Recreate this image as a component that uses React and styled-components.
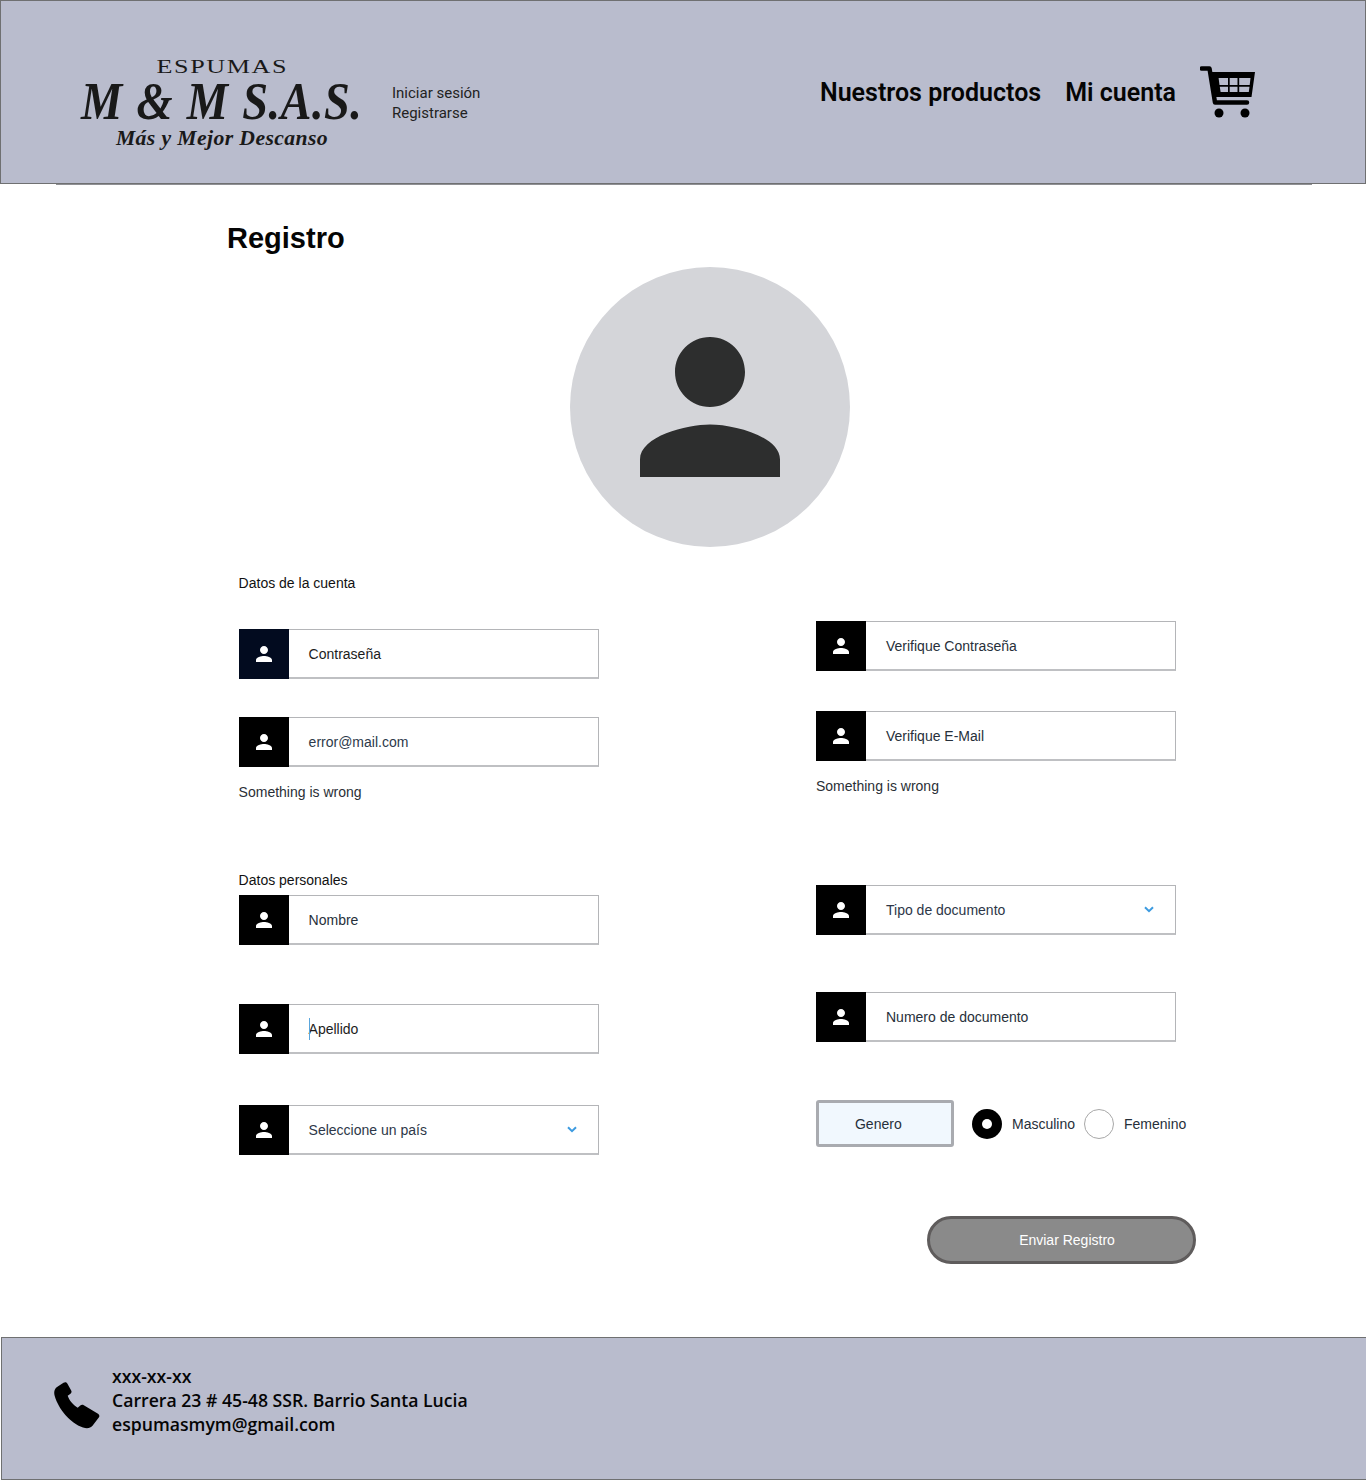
import React from "react";
import styled, { createGlobalStyle } from "styled-components";

const Global = createGlobalStyle`
  html, body { margin: 0; padding: 0; background: #fff; }
  body { font-family: "Liberation Sans", Arial, sans-serif; width: 1366px; }
  * { box-sizing: border-box; }
`;

const Page = styled.div`
  width: 1366px;
  height: 1480px;
  display: flex;
  flex-direction: column;
`;

const Header = styled.header`
  height: 184px;
  flex: none;
  background: #b9bccd;
  border: 1px solid #6f7071;
  display: flex;
  align-items: flex-start;
  padding: 0 110px 0 81px;
`;

const Logo = styled.div`
  width: 280px;
  margin-top: 57px;
  display: flex;
  flex-direction: column;
  align-items: center;
  color: #191919;
  font-family: "Liberation Serif", "Times New Roman", serif;
  white-space: nowrap;
`;

const LogoTop = styled.div`
  font-size: 18px;
  line-height: 18px;
  letter-spacing: 1.1px;
  transform: scaleX(1.45);
`;

const LogoMain = styled.div`
  font-size: 53px;
  line-height: 51px;
  font-style: italic;
  font-weight: 700;
  letter-spacing: 0.5px;
  word-spacing: 2px;
  transform: scaleX(0.875);
`;

const LogoTag = styled.div`
  font-size: 21.7px;
  line-height: 26px;
  margin-top: -2px;
  font-style: italic;
  font-weight: 700;
  letter-spacing: 0.4px;
`;

const AuthLinks = styled.div`
  margin: 82px 0 0 30px;
  display: flex;
  flex-direction: column;
  font-family: Roboto, sans-serif;
  font-size: 15px;
  line-height: 20px;
  color: #222;
`;

const Nav = styled.nav`
  margin-left: auto;
  margin-top: 64px;
  display: flex;
  align-items: flex-start;
  gap: 24px;
  font-family: Roboto, sans-serif;
  font-weight: 600;
  font-size: 25px;
  line-height: 56px;
  color: #050505;
  height: 54px;
  white-space: nowrap;
`;

const NavLink = styled.span`
  display: block;
`;

const Rule = styled.div`
  flex: none;
  height: 1px;
  width: 1256px;
  margin-left: 56px;
  background: #8f9094;
`;

const Main = styled.main`
  flex: 1;
  padding: 36px 0 0 227px;
  display: flex;
  flex-direction: column;
`;

const Title = styled.h1`
  margin: 0;
  font-size: 29px;
  line-height: 34px;
  font-weight: 700;
  color: #050505;
`;

const Avatar = styled.div`
  width: 280px;
  height: 280px;
  margin: 12px 0 0 343px;
  border-radius: 50%;
  background: #d4d5d9;
  display: flex;
  align-items: center;
  justify-content: center;
  color: #2d2e2e;
`;

const FormGrid = styled.div`
  margin-left: 11.6px;
  display: grid;
  grid-template-columns: 360px 380px;
  column-gap: 217.4px;
  align-items: start;
`;

const Column = styled.div`
  display: flex;
  flex-direction: column;
`;

const SectionLabel = styled.div`
  margin-top: ${(p) => p.$top}px;
  font-size: 14px;
  line-height: 16px;
  color: #111;
`;

const Message = styled.div`
  margin-top: ${(p) => p.$top}px;
  font-size: 14px;
  line-height: 16px;
  color: #2a2f36;
`;

const Field = styled.div`
  margin-top: ${(p) => p.$top}px;
  width: 360px;
  height: 50px;
  display: flex;
`;

const IconBox = styled.div`
  flex: none;
  width: 50px;
  background: ${(p) => p.$bg || "#000"};
  color: #fff;
  display: flex;
  align-items: center;
  justify-content: center;
`;

const FieldBody = styled.div`
  flex: 1;
  background: #fff;
  border: 1px solid #b4b5b8;
  border-left: none;
  border-bottom: 2px solid #bfc0c3;
  padding: 0 21px 0 20px;
  display: flex;
  align-items: center;
  justify-content: space-between;
  font-size: 14px;
  color: ${(p) => p.$color || "#1c1c1c"};
`;

const FieldText = styled.span`
  position: relative;
`;

const Caret = styled.span`
  position: absolute;
  left: 0;
  top: -3px;
  width: 1px;
  height: 22px;
  background: #5aa6dc;
`;

const GenderRow = styled.div`
  margin-top: ${(p) => p.$top}px;
  height: 47px;
  display: flex;
  align-items: center;
  font-size: 14px;
  color: #27303a;
`;

const GenderBox = styled.div`
  width: 138px;
  height: 47px;
  background: #f1f8fe;
  border: 3px solid #a9abb0;
  border-radius: 3px;
  padding-left: 36px;
  display: flex;
  align-items: center;
  margin-right: 18px;
`;

const Radio = styled.span`
  flex: none;
  width: 30px;
  height: 30px;
  border-radius: 50%;
  margin-right: 10px;
  display: flex;
  align-items: center;
  justify-content: center;
  background: ${(p) => (p.$on ? "#000" : "#fff")};
  border: ${(p) => (p.$on ? "none" : "1px solid #a8a8a8")};
  &::after {
    content: "";
    display: ${(p) => (p.$on ? "block" : "none")};
    width: 10px;
    height: 10px;
    border-radius: 50%;
    background: #fff;
  }
`;

const RadioLabel = styled.span`
  margin-right: 9px;
`;

const Submit = styled.button`
  margin-top: ${(p) => p.$top}px;
  align-self: flex-end;
  width: 269px;
  height: 48px;
  padding: 0 0 0 11px;
  background: #8a8a8a;
  border: 3px solid #5f5c5c;
  border-radius: 24px;
  color: #fff;
  font-family: "Liberation Sans", Arial, sans-serif;
  font-size: 14px;
`;

const Footer = styled.footer`
  flex: none;
  height: 143px;
  margin-left: 1px;
  background: #b9bccd;
  border: 1px solid #6f7071;
  border-right: none;
  display: flex;
  align-items: flex-start;
  padding: 26px 0 0 52px;
`;

const Contact = styled.div`
  margin-left: 12px;
  font-family: "Open Sans", "Noto Sans", sans-serif;
  font-weight: 600;
  font-size: 17.65px;
  line-height: 24px;
  color: #050505;
  white-space: nowrap;
`;

const PhoneWrap = styled.div`
  margin-top: 18px;
  line-height: 0;
`;

const Person = ({ size = 24 }) => (
  <svg width={size} height={size} viewBox="0 0 24 24" fill="currentColor" aria-hidden="true">
    <path d="M12 12c2.21 0 4-1.79 4-4s-1.79-4-4-4-4 1.79-4 4 1.79 4 4 4zm0 2c-2.67 0-8 1.34-8 4v2h16v-2c0-2.66-5.33-4-8-4z" />
  </svg>
);

const Chevron = () => (
  <svg width="10" height="7" viewBox="0 0 10 7" fill="none" aria-hidden="true">
    <path d="M1 1.2 5 5.2 9 1.2" stroke="#3d9be0" strokeWidth="2" />
  </svg>
);

const Cart = () => (
  <svg width="55" height="53" viewBox="0 0 55 53" aria-hidden="true">
    <path d="M1.5 3.5H9.5L15 37.5H47" fill="none" stroke="#000" strokeWidth="4.5" strokeLinecap="round" strokeLinejoin="round" />
    <path
      fillRule="evenodd"
      d="M10 7H55L51.5 32H14ZM18.6 13 19.5 20H28V13ZM29.7 13V20H37.5V13ZM39.2 13V20H49.7L50.5 13ZM19.8 21.7 20.6 27H28V21.7ZM29.7 21.7V27H37.5V21.7ZM39.2 21.7V27H48.8L49.5 21.7Z"
      fill="#000"
    />
    <circle cx="19" cy="48" r="4.5" fill="#000" />
    <circle cx="45" cy="48" r="4.5" fill="#000" />
  </svg>
);

const Phone = () => (
  <svg width="46" height="47" viewBox="0 0 46 47" aria-hidden="true">
    <path
      fill="#000"
      d="M3 5 9.5.8C11-.2 12.5.2 13.3 1.5L17.2 8.5C17.9 9.8 17.5 11 16.5 11.8L13.7 13.8C15 18 19 23 23.7 25.8L26.3 23.5C27.3 22.6 28.6 22.5 29.8 23.2L44 31.8C45.5 32.8 45.8 34.3 44.8 35.6L38.5 43.8C36.5 46.2 33 46.8 29 45.5 16 41 4.5 27 .7 14-.5 10 .6 6.8 3 5Z"
    />
  </svg>
);

const InputField = ({ top, text, bg, color, select, caret }) => (
  <Field $top={top}>
    <IconBox $bg={bg}>
      <Person />
    </IconBox>
    <FieldBody $color={color}>
      <FieldText>
        {caret && <Caret />}
        {text}
      </FieldText>
      {select && <Chevron />}
    </FieldBody>
  </Field>
);

export default function App() {
  return (
    <Page>
      <Global />
      <Header>
        <Logo>
          <LogoTop>ESPUMAS</LogoTop>
          <LogoMain>M &amp; M S.A.S.</LogoMain>
          <LogoTag>Más y Mejor Descanso</LogoTag>
        </Logo>
        <AuthLinks>
          <span>Iniciar sesión</span>
          <span>Registrarse</span>
        </AuthLinks>
        <Nav>
          <NavLink>Nuestros productos</NavLink>
          <NavLink>Mi cuenta</NavLink>
          <Cart />
        </Nav>
      </Header>
      <Rule />
      <Main>
        <Title>Registro</Title>
        <Avatar>
          <Person size={210} />
        </Avatar>
        <FormGrid>
          <Column>
            <SectionLabel $top={28}>Datos de la cuenta</SectionLabel>
            <InputField top={38} text="Contraseña" bg="#020b1f" />
            <InputField top={38} text="error@mail.com" color="#2d3a4a" />
            <Message $top={17}>Something is wrong</Message>
            <SectionLabel $top={72}>Datos personales</SectionLabel>
            <InputField top={7} text="Nombre" color="#27303a" />
            <InputField top={59} text="Apellido" caret />
            <InputField top={51} text="Seleccione un país" color="#2d3748" select />
          </Column>
          <Column>
            <InputField top={74} text="Verifique Contraseña" color="#27303a" />
            <InputField top={40} text="Verifique E-Mail" color="#27303a" />
            <Message $top={17}>Something is wrong</Message>
            <InputField top={91} text="Tipo de documento" color="#2d3748" select />
            <InputField top={57} text="Numero de documento" color="#27303a" />
            <GenderRow $top={58}>
              <GenderBox>Genero</GenderBox>
              <Radio $on />
              <RadioLabel>Masculino</RadioLabel>
              <Radio />
              <span>Femenino</span>
            </GenderRow>
            <Submit $top={69}>Enviar Registro</Submit>
          </Column>
        </FormGrid>
      </Main>
      <Footer>
        <PhoneWrap>
          <Phone />
        </PhoneWrap>
        <Contact>
          <div>xxx-xx-xx</div>
          <div>Carrera 23 # 45-48 SSR. Barrio Santa Lucia</div>
          <div>espumasmym@gmail.com</div>
        </Contact>
      </Footer>
    </Page>
  );
}
